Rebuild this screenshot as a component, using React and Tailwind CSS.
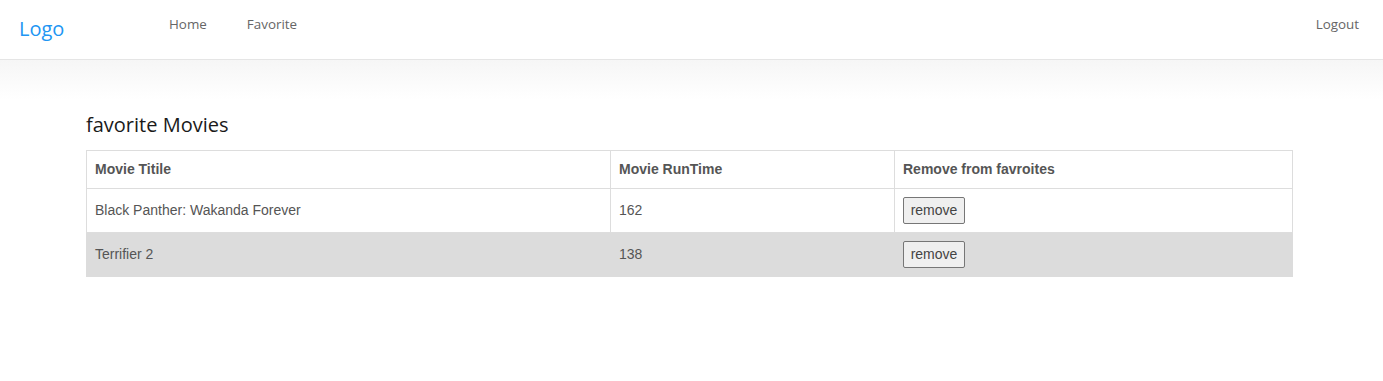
import React from "react";

const movies = [
  { title: "Black Panther: Wakanda Forever", runtime: 162 },
  { title: "Terrifier 2", runtime: 138 },
];

export default function App() {
  return (
    <div className="min-h-[381px] bg-white" style={{ fontFamily: '"Open Sans", "Noto Sans", sans-serif' }}>
      <nav className="h-[60px] flex items-center border-b border-[#e5e5e5] pl-[19px] pr-[24px]">
        <span className="text-[20px] text-[#2196f3] w-[150px] -mt-[2px]">Logo</span>
        <div className="flex gap-[40px] text-[13.4px] text-[#666] -mt-[10px]">
          <a>Home</a>
          <a>Favorite</a>
        </div>
        <a className="ml-auto text-[13.4px] text-[#666] -mt-[10px]">Logout</a>
      </nav>
      <div className="h-[40px] bg-gradient-to-b from-[#f6f6f6] to-white" />
      <main className="pl-[86px] pr-[90px]">
        <h2 className="text-[20px] text-[#1a1a1a] leading-[28px] mt-[11px] mb-[11px]">favorite Movies</h2>
        <table
          className="w-full border-collapse text-[#555]"
          style={{ fontFamily: '"Liberation Sans", Arial, sans-serif' }}
        >
          <thead>
            <tr className="h-[38px] text-[14px] font-bold">
              <th className="border border-[#ddd] text-left px-[8px] w-[524px]">Movie Titile</th>
              <th className="border border-[#ddd] text-left px-[8px] w-[284px]">Movie RunTime</th>
              <th className="border border-[#ddd] text-left px-[8px]">Remove from favroites</th>
            </tr>
          </thead>
          <tbody className="text-[14px]">
            {movies.map((m, i) => {
              const cell = i % 2 ? "border border-[#dcdcdc] px-[8px]" : "border border-[#ddd] px-[8px]";
              return (
                <tr key={m.title} className={i % 2 ? "h-[44px] bg-[#dcdcdc]" : "h-[44px] bg-white"}>
                  <td className={cell}>{m.title}</td>
                  <td className={cell}>{m.runtime}</td>
                  <td className={cell}>
                    <button className="h-[27px] w-[62px] bg-[#efefef] border border-[#767676] rounded-[2px] text-[#444] text-[14px]">
                      remove
                    </button>
                  </td>
                </tr>
              );
            })}
          </tbody>
        </table>
      </main>
    </div>
  );
}
